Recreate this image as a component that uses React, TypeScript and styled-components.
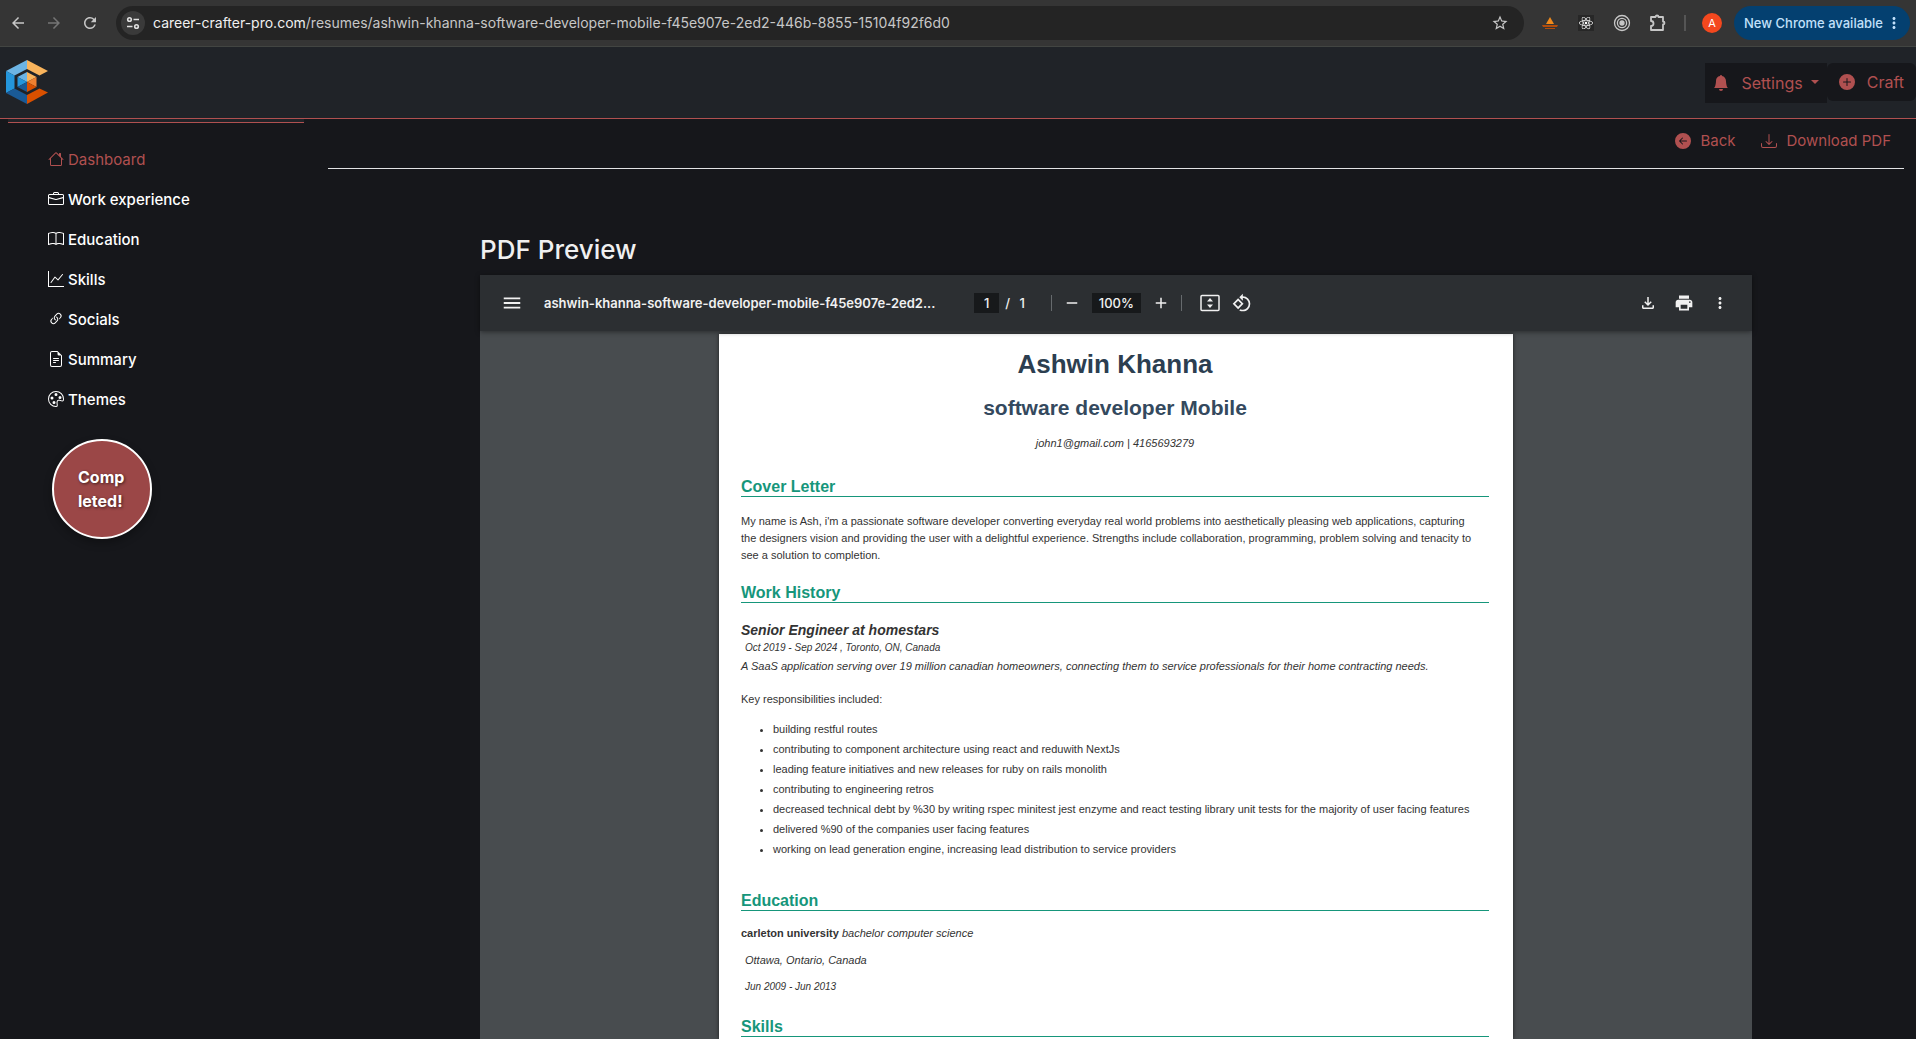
import React from "react";
import styled, { createGlobalStyle, css } from "styled-components";
import {
  BsHouse, BsBriefcase, BsBook, BsGraphUp, BsLink45Deg, BsFileEarmarkText, BsPalette,
  BsBellFill, BsPlusCircleFill, BsArrowLeftCircleFill, BsDownload,
} from "react-icons/bs";
import {
  MdArrowBack, MdArrowForward, MdRefresh, MdStarBorder, MdMenu, MdRemove, MdAdd,
  MdPrint, MdMoreVert, MdRotate90DegreesCcw, MdOutlineFileDownload,
} from "react-icons/md";
import { FaReact } from "react-icons/fa";

const ui = `Inter, "Liberation Sans", sans-serif`;
const accent = "#b05050";

const Global = createGlobalStyle`
  * { box-sizing: border-box; }
  body { margin: 0; background: #16171b; font-family: ${ui}; }
  button, input { font: inherit; color: inherit; }
  button { padding: 0; border: 0; background: none; cursor: pointer; }
  a { color: inherit; text-decoration: none; }
  svg { display: block; flex: none; }
`;

const Screen = styled.div`
  display: flex;
  flex-direction: column;
  height: 100vh;
  overflow: hidden;
`;

/* Browser bar */
const BrowserBar = styled.header`
  display: flex;
  align-items: center;
  flex: none;
  height: 47px;
  padding-right: 6px;
  background: #353535;
  border-bottom: 1px solid #424542;
  color: #c7c7c7;
`;
const BarButton = styled.button<{ $dim?: boolean }>`
  display: grid;
  place-items: center;
  width: 36px;
  height: 34px;
  color: ${(p) => (p.$dim ? "#757575" : "#c7c7c7")};
`;
const Address = styled.div`
  display: flex;
  align-items: center;
  flex: 1;
  height: 34px;
  margin-left: 8px;
  padding: 0 8px 0 5px;
  border-radius: 17px;
  background: #242424;
`;
const SiteInfo = styled.button`
  display: grid;
  place-items: center;
  width: 24px;
  height: 24px;
  border-radius: 12px;
  background: #3a3a3a;
`;
const Url = styled.div`
  flex: 1;
  margin-left: 8px;
  font-size: 14px;
  line-height: 20px;
  color: #c7c7c7;
  white-space: nowrap;
  b { font-weight: 400; color: #f0f0f0; }
`;
const Extensions = styled.div`
  display: flex;
  align-items: center;
  gap: 4px;
  margin-left: 10px;
`;
const ExtButton = styled.button`
  display: grid;
  place-items: center;
  width: 32px;
  height: 32px;
`;
const ReactTile = styled.span`
  display: grid;
  place-items: center;
  width: 16px;
  height: 16px;
  background: #272727;
  color: #fff;
`;
const BarRule = styled.span`
  width: 2px;
  height: 16px;
  margin: 0 16px 0 10px;
  background: #555;
`;
const Avatar = styled.button`
  width: 20px;
  height: 20px;
  border-radius: 10px;
  background: #f4481e;
  color: #fff;
  font-size: 11px;
  line-height: 20px;
`;
const UpdatePill = styled.button`
  display: flex;
  align-items: center;
  gap: 2px;
  height: 34px;
  margin-left: 12px;
  padding: 0 7px 0 10px;
  border-radius: 17px;
  background: #044070;
  color: #c2e0fb;
  font-size: 13px;
  font-weight: 500;
  white-space: nowrap;
`;

/* Site header */
const SiteHeader = styled.header`
  display: flex;
  justify-content: space-between;
  align-items: flex-start;
  flex: none;
  height: 72px;
  border-bottom: 1px solid ${accent};
  background: #202328;
`;
const Brand = styled.a`
  padding: 13px 0 0 6px;
`;
const HeaderNav = styled.nav`
  display: flex;
  align-items: flex-start;
  padding-top: 16px;
`;
const NavButton = styled.button<{ $round?: boolean }>`
  display: flex;
  align-items: center;
  height: ${(p) => (p.$round ? 38 : 40)}px;
  gap: 12px;
  padding: ${(p) => (p.$round ? "0 12px" : "0 8px")};
  border-radius: ${(p) => (p.$round ? 6 : 0)}px;
  background: #16171b;
  color: ${accent};
  font-size: 16px;
  line-height: 24px;
`;
const Caret = styled.span`
  width: 0;
  height: 0;
  margin: -2px 0 0 -4px;
  border: 4px solid transparent;
  border-top-color: currentColor;
  border-bottom: 0;
`;

/* Body */
const Columns = styled.div`
  display: flex;
  flex: 1;
  min-height: 0;
`;
const Sidebar = styled.aside`
  flex: none;
  width: 304px;
  padding-left: 8px;
`;
const SidebarEdge = styled.div`
  height: 4px;
  background: #202328;
  border-bottom: 1px solid ${accent};
`;
const SideList = styled.ul`
  margin: 0;
  padding: 16px 0 0 40px;
  list-style: none;
`;
const SideLink = styled.a<{ $active?: boolean }>`
  display: flex;
  align-items: center;
  gap: 4px;
  height: 40px;
  font-size: 15px;
  font-weight: ${(p) => (p.$active ? 400 : 500)};
  color: ${(p) => (p.$active ? accent : "#fff")};
`;
const Status = styled.button`
  display: block;
  width: 100px;
  height: 100px;
  margin: 20px 0 0 44px;
  padding: 0 24px;
  border: 2px solid #fff;
  border-radius: 50px;
  background: #9b4747;
  box-shadow: 0 4px 8px rgba(0, 0, 0, 0.3);
  color: #fff;
  font-size: 16px;
  font-weight: 700;
  line-height: 24px;
  text-align: left;
  text-shadow: 1px 1px 3px rgba(0, 0, 0, 0.6);
`;
const Main = styled.main`
  display: flex;
  flex-direction: column;
  flex: 1;
  min-width: 0;
  padding: 0 12px 0 24px;
`;
const Actions = styled.div`
  display: flex;
  justify-content: flex-end;
  flex: none;
  gap: 26px;
  height: 50px;
  padding: 0 13px 6px 0;
  border-bottom: 1px solid #e2e3e5;
`;
const Action = styled.button`
  display: flex;
  align-items: center;
  gap: 9px;
  color: ${accent};
  font-size: 15px;
`;
const Preview = styled.section`
  display: flex;
  flex-direction: column;
  flex: 1;
  min-height: 0;
  padding: 64px 152px 0;
`;
const PreviewTitle = styled.h2`
  flex: none;
  margin: 0 0 8px;
  color: #f0f0f0;
  font-size: 26px;
  font-weight: 500;
  line-height: 34px;
`;

/* PDF viewer */
const Viewer = styled.div`
  display: flex;
  flex-direction: column;
  flex: 1;
  min-height: 0;
  background: #484c4f;
`;
const Toolbar = styled.div`
  display: grid;
  grid-template-columns: 1fr auto 1fr;
  align-items: center;
  flex: none;
  z-index: 1;
  height: 56px;
  padding: 0 20px;
  background: #2c2f32;
  box-shadow: 0 1px 5px rgba(0, 0, 0, 0.45);
  color: #f1f1f1;
  font-size: 13px;
  font-weight: 500;
`;
const Group = styled.div<{ $end?: boolean; $gap?: number }>`
  display: flex;
  align-items: center;
  gap: ${(p) => p.$gap ?? 0}px;
  ${(p) => p.$end && css`justify-content: flex-end;`}
`;
const PageCount = styled(Group)`
  margin-right: 18px;
`;
const FitTools = styled(Group)`
  margin: 0 4px 0 8px;
`;
const FileName = styled.span`
  margin-left: 20px;
  font-weight: 600;
  white-space: nowrap;
`;
const ToolButton = styled.button`
  display: grid;
  place-items: center;
  width: 24px;
  height: 24px;
`;
const ToolInput = styled.input<{ $w: number }>`
  width: ${(p) => p.$w}px;
  height: 20px;
  padding: 0;
  border: 0;
  background: #17191b;
  text-align: center;
`;
const ToolRule = styled.span`
  width: 1px;
  height: 16px;
  background: #666a6d;
`;
const Sheet = styled.article`
  align-self: center;
  flex: 1;
  width: 794px;
  min-height: 0;
  margin-top: 3px;
  padding: 0 24px 0 22px;
  overflow: hidden;
  background: #fff;
  box-shadow: 0 0 4px rgba(0, 0, 0, 0.6);
  color: #333;
  font-family: "Liberation Sans", Arial, sans-serif;
  font-size: 11px;
  line-height: 17px;
`;
const Name = styled.h1`
  margin: 14px 0 0;
  color: #2c3e50;
  font-size: 26px;
  line-height: 32px;
  text-align: center;
`;
const Role = styled.h2`
  margin: 15px 0 0;
  color: #34495e;
  font-size: 21px;
  line-height: 26px;
  text-align: center;
`;
const Contact = styled.p`
  margin: 14px 0 0;
  font-style: italic;
  text-align: center;
`;
const Heading = styled.h3<{ $top: number; $bottom?: number }>`
  height: 20px;
  margin: ${(p) => p.$top}px 0 ${(p) => p.$bottom ?? 16}px;
  border-bottom: 1px solid #16967b;
  color: #16967b;
  font-size: 16px;
  line-height: 20px;
`;
const Para = styled.p<{ $top?: number; $italic?: boolean }>`
  margin: ${(p) => p.$top ?? 0}px 0 0;
  font-style: ${(p) => (p.$italic ? "italic" : "normal")};
`;
const JobTitle = styled.h4`
  margin: 0;
  padding-top: 2px;
  font-size: 14px;
  font-style: italic;
  line-height: 18px;
`;
const Meta = styled.p<{ $top?: number; $small?: boolean }>`
  margin: ${(p) => p.$top ?? 0}px 0 0 4px;
  font-size: ${(p) => (p.$small ? 10 : 11)}px;
  font-style: italic;
`;
const Duties = styled.ul`
  margin: 11px 0 0;
  padding: 0 0 0 32px;
  line-height: 20px;
`;

const LogoIcon = () => (
  <svg width="42" height="44" viewBox="0 0 42 44">
    <path d="M21 0L0 11l8.500 4.500L21 9z" fill="#6cb4e4" />
    <path d="M0 11l8.500 4.500v13L0 33z" fill="#2496dc" />
    <path d="M0 33l8.500-4.500L21 35v9z" fill="#1a5a96" />
    <path d="M21 0l21 11-8.500 4.500L21 9z" fill="#f9b45c" />
    <path d="M21 44l21-11.500-8.500-4L21 35z" fill="#d95000" />
    <path d="M21 12l-9.500 5L21 22z" fill="#6cb4e4" />
    <path d="M11.500 17l9.500 5-9.500 5z" fill="#2496dc" />
    <path d="M11.500 27l9.500-5v10z" fill="#1a5a96" />
    <path d="M21 12l9.500 5L21 22z" fill="#f9b45c" />
    <path d="M30.500 17L21 22l9.500 5z" fill="#f08030" />
    <path d="M30.500 27L21 22v10z" fill="#d95000" />
  </svg>
);
const TuneIcon = () => (
  <svg width="14" height="14" viewBox="0 0 14 14" fill="none" stroke="#e0e0e0" strokeWidth="1.6">
    <circle cx="3.5" cy="3.5" r="1.8" /><path d="M7.5 3.5H13M1 10.5h5.500" /><circle cx="10.500" cy="10.500" r="1.8" />
  </svg>
);
const SailIcon = () => (
  <svg width="16" height="14" viewBox="0 0 16 14">
    <path d="M8 1l4 7H4z" fill="#f08a1c" /><path d="M0 9h16l-1 2H1zM3 12h10v1H3z" fill="#b34d0c" />
  </svg>
);
const TargetIcon = () => (
  <svg width="18" height="18" viewBox="0 0 18 18" fill="none" stroke="#c7c7c7" strokeWidth="1.3">
    <circle cx="9" cy="9" r="7.500" /><circle cx="9" cy="9" r="4.600" /><circle cx="9" cy="9" r="2" fill="#c7c7c7" />
  </svg>
);
const PuzzleIcon = () => (
  <svg width="18" height="18" viewBox="0 0 18 18" fill="none" stroke="#c7c7c7" strokeWidth="1.8" strokeLinejoin="round">
    <path d="M2 3h4.500a1.500 1.500 0 0 1 3 0H14v4.500a1.500 1.500 0 0 1 0 3V16H2v-4a2.500 2.500 0 0 0 0-5z" />
  </svg>
);
const FitIcon = () => (
  <svg width="20" height="18" viewBox="0 0 20 18">
    <rect x="1" y="1.500" width="18" height="15" rx="1" fill="none" stroke="currentColor" strokeWidth="1.500" />
    <path d="M10 4l3 3.500H7zM10 14l3-3.500H7z" fill="currentColor" />
  </svg>
);

const links = [
  { label: "Dashboard", Icon: BsHouse },
  { label: "Work experience", Icon: BsBriefcase },
  { label: "Education", Icon: BsBook },
  { label: "Skills", Icon: BsGraphUp },
  { label: "Socials", Icon: BsLink45Deg },
  { label: "Summary", Icon: BsFileEarmarkText },
  { label: "Themes", Icon: BsPalette },
];
const duties = [
  "building restful routes",
  "contributing to component architecture using react and reduwith NextJs",
  "leading feature initiatives and new releases for ruby on rails monolith",
  "contributing to engineering retros",
  "decreased technical debt by %30 by writing rspec minitest jest enzyme and react testing library unit tests for the majority of user facing features",
  "delivered %90 of the companies user facing features",
  "working on lead generation engine, increasing lead distribution to service providers",
];

export default function App() {
  return (
    <Screen>
      <Global />
      <BrowserBar>
        <BarButton aria-label="Back"><MdArrowBack size={18} /></BarButton>
        <BarButton aria-label="Forward" $dim><MdArrowForward size={18} /></BarButton>
        <BarButton aria-label="Reload"><MdRefresh size={18} /></BarButton>
        <Address>
          <SiteInfo aria-label="Site information"><TuneIcon /></SiteInfo>
          <Url><b>career-crafter-pro.com</b>/resumes/ashwin-khanna-software-developer-mobile-f45e907e-2ed2-446b-8855-15104f92f6d0</Url>
          <ExtButton aria-label="Bookmark"><MdStarBorder size={18} /></ExtButton>
        </Address>
        <Extensions>
          <ExtButton aria-label="Sail extension"><SailIcon /></ExtButton>
          <ExtButton aria-label="React tools"><ReactTile><FaReact size={14} /></ReactTile></ExtButton>
          <ExtButton aria-label="Target extension"><TargetIcon /></ExtButton>
          <ExtButton aria-label="Extensions"><PuzzleIcon /></ExtButton>
        </Extensions>
        <BarRule />
        <Avatar>A</Avatar>
        <UpdatePill>New Chrome available<MdMoreVert size={18} /></UpdatePill>
      </BrowserBar>
      <SiteHeader>
        <Brand href="#" aria-label="Home"><LogoIcon /></Brand>
        <HeaderNav>
          <NavButton><BsBellFill size={16} />Settings<Caret /></NavButton>
          <NavButton $round><BsPlusCircleFill size={16} />Craft</NavButton>
        </HeaderNav>
      </SiteHeader>
      <Columns>
        <Sidebar>
          <SidebarEdge />
          <SideList>
            {links.map(({ label, Icon }, i) => (
              <li key={label}><SideLink href="#" $active={i === 0}><Icon size={16} />{label}</SideLink></li>
            ))}
          </SideList>
          <Status>Comp<br />leted!</Status>
        </Sidebar>
        <Main>
          <Actions>
            <Action><BsArrowLeftCircleFill size={16} />Back</Action>
            <Action><BsDownload size={16} />Download PDF</Action>
          </Actions>
          <Preview>
            <PreviewTitle>PDF Preview</PreviewTitle>
            <Viewer>
              <Toolbar>
                <Group>
                  <ToolButton aria-label="Menu"><MdMenu size={22} /></ToolButton>
                  <FileName>ashwin-khanna-software-developer-mobile-f45e907e-2ed2...</FileName>
                </Group>
                <Group $gap={8}>
                  <PageCount $gap={6}><ToolInput $w={25} aria-label="Page" defaultValue="1" /><span>/</span><span>&nbsp;1</span></PageCount>
                  <ToolRule />
                  <ToolButton aria-label="Zoom out"><MdRemove size={18} /></ToolButton>
                  <ToolInput $w={49} aria-label="Zoom" defaultValue="100%" />
                  <ToolButton aria-label="Zoom in"><MdAdd size={18} /></ToolButton>
                  <ToolRule />
                  <FitTools $gap={8}>
                    <ToolButton aria-label="Fit to page"><FitIcon /></ToolButton>
                    <ToolButton aria-label="Rotate"><MdRotate90DegreesCcw size={20} /></ToolButton>
                  </FitTools>
                </Group>
                <Group $end $gap={12}>
                  <ToolButton aria-label="Download"><MdOutlineFileDownload size={18} /></ToolButton>
                  <ToolButton aria-label="Print"><MdPrint size={20} /></ToolButton>
                  <ToolButton aria-label="More"><MdMoreVert size={18} /></ToolButton>
                </Group>
              </Toolbar>
              <Sheet>
                <Name>Ashwin Khanna</Name>
                <Role>software developer Mobile</Role>
                <Contact>john1@gmail.com | 4165693279</Contact>
                <Heading $top={25}>Cover Letter</Heading>
                <Para>
                  My name is Ash, i'm a passionate software developer converting everyday real world problems into aesthetically pleasing web applications, capturing<br />
                  the designers vision and providing the user with a delightful experience. Strengths include collaboration, programming, problem solving and tenacity to<br />
                  see a solution to completion.
                </Para>
                <Heading $top={19}>Work History</Heading>
                <JobTitle>Senior Engineer at homestars</JobTitle>
                <Meta $small>Oct 2019 - Sep 2024 , Toronto, ON, Canada</Meta>
                <Para $top={2} $italic>A SaaS application serving over 19 million canadian homeowners, connecting them to service professionals for their home contracting needs.</Para>
                <Para $top={16}>Key responsibilities included:</Para>
                <Duties>{duties.map((d) => <li key={d}>{d}</li>)}</Duties>
                <Heading $top={32} $bottom={14}>Education</Heading>
                <Para><b>carleton university</b> <i>bachelor computer science</i></Para>
                <Meta $top={10}>Ottawa, Ontario, Canada</Meta>
                <Meta $top={9} $small>Jun 2009 - Jun 2013</Meta>
                <Heading $top={22}>Skills</Heading>
              </Sheet>
            </Viewer>
          </Preview>
        </Main>
      </Columns>
    </Screen>
  );
}
